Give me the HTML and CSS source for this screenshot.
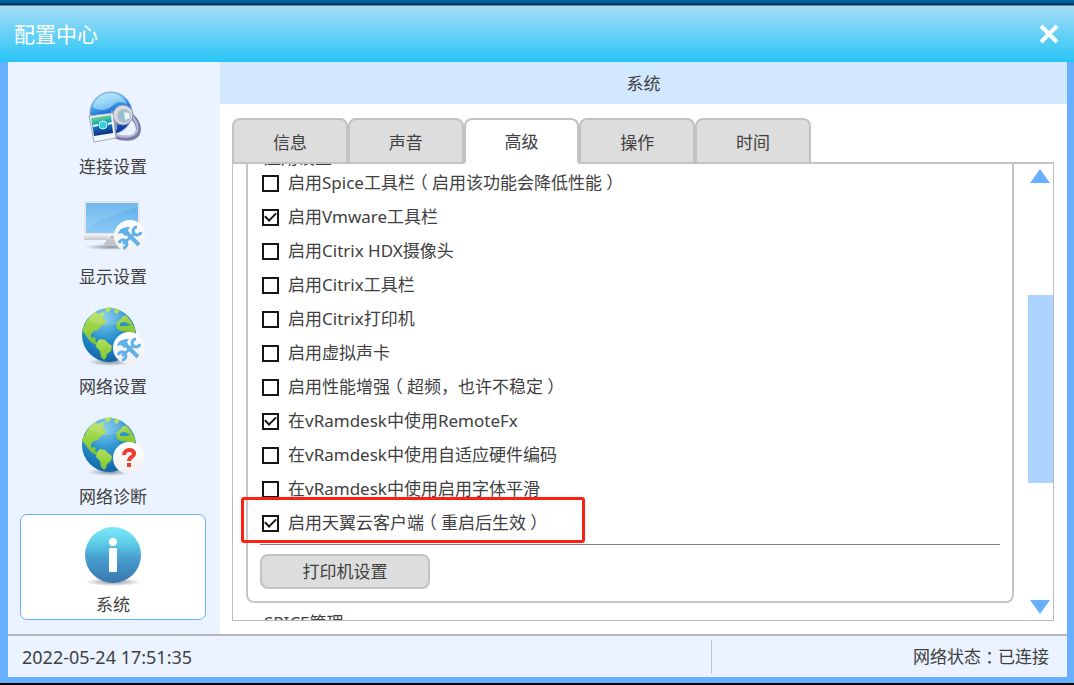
FILE: index.html
```html
<!DOCTYPE html>
<html lang="zh-CN">
<head>
<meta charset="utf-8">
<title>配置中心</title>
<link rel="stylesheet" href="styles.css">
</head>
<body>
<svg class="defs" width="0" height="0" aria-hidden="true">
  <defs>
    <radialGradient id="ocean" cx="0.42" cy="0.2" r="0.85">
      <stop offset="0" stop-color="#7cc8ee"/><stop offset="0.45" stop-color="#2b93cf"/><stop offset="1" stop-color="#0b5e9f"/>
    </radialGradient>
    <linearGradient id="land" x1="0" y1="0" x2="0" y2="1">
      <stop offset="0" stop-color="#b4e05a"/><stop offset="1" stop-color="#7cc42c"/>
    </linearGradient>
    <linearGradient id="disc" x1="0" y1="0" x2="0" y2="1">
      <stop offset="0" stop-color="#ffffff"/><stop offset="1" stop-color="#efefef"/>
    </linearGradient>
    <linearGradient id="screen" x1="0" y1="0" x2="0" y2="1">
      <stop offset="0" stop-color="#5daeea"/><stop offset="1" stop-color="#8ccbf6"/>
    </linearGradient>
    <linearGradient id="chin" x1="0" y1="0" x2="0" y2="1">
      <stop offset="0" stop-color="#f6f6f6"/><stop offset="1" stop-color="#c3c6ca"/>
    </linearGradient>
    <linearGradient id="info" x1="0" y1="0" x2="0" y2="1">
      <stop offset="0" stop-color="#7ce9fa"/><stop offset="0.3" stop-color="#5ccbe6"/><stop offset="0.55" stop-color="#479fcf"/><stop offset="1" stop-color="#3b76ae"/>
    </linearGradient>
    <linearGradient id="dome" x1="0" y1="0" x2="0.3" y2="1">
      <stop offset="0" stop-color="#a9e6fb"/><stop offset="0.3" stop-color="#5fc0f2"/><stop offset="0.55" stop-color="#1c74e0"/><stop offset="1" stop-color="#1140a8"/>
    </linearGradient>
    <linearGradient id="photo" x1="0" y1="0" x2="0.2" y2="1">
      <stop offset="0" stop-color="#a5e070"/><stop offset="0.35" stop-color="#2fb8b0"/><stop offset="0.65" stop-color="#126bb8"/><stop offset="1" stop-color="#0b2f7e"/>
    </linearGradient>
    <radialGradient id="shade">
      <stop offset="0" stop-color="#5c6670" stop-opacity="0.7"/><stop offset="1" stop-color="#5c6670" stop-opacity="0"/>
    </radialGradient>
    <symbol id="globe" viewBox="0 0 64 64">
      <ellipse cx="29" cy="58" rx="22" ry="4" fill="url(#shade)"/>
      <circle cx="28" cy="31" r="27" fill="url(#ocean)"/>
      <path fill="url(#land)" d="M4 21C6 15 10 11 14 8l3 2 5-2 2 2-3 4 4 2 0 4-4 1-4 5-4 1-3 3 0 4 3-1 2 2-1 2 3 3-2 1-5-3-4-5-3-4-2-4z"/>
      <path fill="url(#land)" d="M16 38l3-3 5 1 3 3 4 3-1 5-4 3-1 4-2 2-3-3-1-6-4-4z"/>
      <path fill="url(#land)" d="M24 4l7-1-2 4-4 2zM34 4l5 2-3 4-3-2zM41 13l4-2 5 6 4 8 0 7-4 0-2-4-8-1-4-2-1-6 4-3z"/>
      <path fill="#2d93cd" d="M39 19l5-1 6 3-5 1-6 0z"/>
      <ellipse cx="26" cy="13" rx="18" ry="8" fill="#ffffff" opacity="0.13"/>
    </symbol>
    <symbol id="tools" viewBox="0 0 32 32">
      <circle cx="16" cy="16" r="16" fill="url(#disc)"/>
      <path d="M12 12L25 25" fill="none" stroke="#62b0e8" stroke-width="4"/>
      <path d="M21 13L9 24" fill="none" stroke="#62b0e8" stroke-width="3"/>
      <path d="M4 14C5 9 9 7 16 7L14 10 15 13 11 16 8 13z" fill="#62b0e8"/>
      <path d="M23 7a4 4 0 1 0 4 5" fill="none" stroke="#62b0e8" stroke-width="3"/>
      <path d="M5 23a4 4 0 1 1 4 5" fill="none" stroke="#62b0e8" stroke-width="3"/>
    </symbol>
  </defs>
</svg>

<div class="desktop-edge"></div>
<header class="titlebar">
  <h1 class="title">配置中心</h1>
  <button class="close" type="button" aria-label="关闭">
    <svg width="20" height="20" viewBox="0 0 20 20"><path d="M2 2L18 18M18 2L2 18" fill="none" stroke="#fff" stroke-width="4"/></svg>
  </button>
</header>

<div class="frame">
  <div class="body">
    <nav class="sidebar">
      <button class="nav-item" type="button">
        <svg width="64" height="64" viewBox="0 0 64 64">
          <circle cx="30" cy="29" r="21" fill="url(#dome)" stroke="#8f9fc4" stroke-width="1"/>
          <path d="M12 23C15 12 24 9 31 9c8 1 13 6 15 12-6-5-11-3-15 1s-12 6-19 1z" fill="#e6faff" opacity="0.45"/>
          <path d="M47 30C54 33 59 42 57 48c-2 7-13 8-23 4" fill="none" stroke="#7a7ba6" stroke-width="5"/>
          <path d="M47 30C54 33 58 42 56 47c-2 6-12 7-21 4" fill="none" stroke="#b9bbd6" stroke-width="2"/>
          <path d="M30 26l7 3-1 17-6-2z" fill="#8796bb"/>
          <circle cx="42" cy="31" r="10" fill="#d5dbe4" stroke="#8b94ad" stroke-width="1"/>
          <circle cx="43" cy="32" r="6" fill="#8fc0cb" stroke="#b4bcc9" stroke-width="2"/>
          <path d="M43 28l5 1 1 5-5 2z" fill="#edf2f5"/>
          <path d="M8 32l24-3 3 25-22 4z" fill="#f2f4f7" stroke="#a6adba" stroke-width="1"/>
          <path d="M10 34l20-3 2 18-19 3z" fill="url(#photo)"/>
          <path d="M12 42l5-1m10-1l4-1" stroke="#e6ffff" stroke-width="2"/>
          <circle cx="22" cy="41" r="4" fill="#3ccbd2" stroke="#c7fbf5" stroke-width="1"/>
        </svg>
        <span>连接设置</span>
      </button>
      <button class="nav-item" type="button">
        <svg width="64" height="64" viewBox="0 0 64 64">
          <ellipse cx="31" cy="53" rx="28" ry="3" fill="url(#shade)"/>
          <path d="M26 45h14l2 7H22z" fill="#bfc2c6"/>
          <rect x="3" y="7" width="56" height="33" fill="#e3e7eb"/>
          <rect x="5" y="9" width="52" height="30" fill="url(#screen)"/>
          <path d="M5 9h52v4C38 18 20 25 5 35z" fill="#ffffff" opacity="0.12"/>
          <rect x="3" y="40" width="56" height="6" fill="url(#chin)"/>
          <circle cx="31" cy="43" r="1" fill="#8f959c"/>
          <use href="#tools" x="33" y="26" width="32" height="32"/>
        </svg>
        <span>显示设置</span>
      </button>
      <button class="nav-item" type="button">
        <svg width="64" height="64" viewBox="0 0 64 64">
          <use href="#globe" width="64" height="64"/>
          <use href="#tools" x="32" y="28" width="32" height="32"/>
        </svg>
        <span>网络设置</span>
      </button>
      <button class="nav-item" type="button">
        <svg width="64" height="64" viewBox="0 0 64 64">
          <use href="#globe" width="64" height="64"/>
          <circle cx="48" cy="44" r="16" fill="url(#disc)"/>
          <path d="M43 41c0-7 11-6 10-1 0 3-5 3-5 7" fill="none" stroke="#f03a32" stroke-width="4"/>
          <rect x="46" y="49" width="4" height="4" fill="#f03a32"/>
        </svg>
        <span>网络诊断</span>
      </button>
      <button class="nav-item nav-item-active" type="button" aria-current="page">
        <svg width="64" height="64" viewBox="0 0 64 64">
          <ellipse cx="32" cy="58" rx="28" ry="4" fill="url(#shade)"/>
          <circle cx="32" cy="31" r="28" fill="url(#info)"/>
          <circle cx="32" cy="18" r="4" fill="#fff"/>
          <rect x="28" y="24" width="8" height="24" rx="1" fill="#fff"/>
        </svg>
        <span>系统</span>
      </button>
    </nav>

    <main class="content">
      <h2 class="content-title">系统</h2>
      <div class="content-body">
        <div class="tabs" role="tablist">
          <button class="tab" type="button" role="tab">信息</button>
          <button class="tab" type="button" role="tab">声音</button>
          <button class="tab tab-active" type="button" role="tab" aria-selected="true">高级</button>
          <button class="tab" type="button" role="tab">操作</button>
          <button class="tab" type="button" role="tab">时间</button>
        </div>
        <div class="panel" role="tabpanel">
          <div class="scroll-content">
            <section class="group">
              <h3 class="group-title">应用设置</h3>
              <label class="option"><input class="check" type="checkbox"><span>启用Spice工具栏<span class="mark">（</span>启用该功能会降低性能<span class="mark">）</span></span></label>
              <label class="option"><input class="check" type="checkbox" checked>启用Vmware工具栏</label>
              <label class="option"><input class="check" type="checkbox">启用Citrix HDX摄像头</label>
              <label class="option"><input class="check" type="checkbox">启用Citrix工具栏</label>
              <label class="option"><input class="check" type="checkbox">启用Citrix打印机</label>
              <label class="option"><input class="check" type="checkbox">启用虚拟声卡</label>
              <label class="option"><input class="check" type="checkbox"><span>启用性能增强<span class="mark">（</span>超频，也许不稳定<span class="mark">）</span></span></label>
              <label class="option"><input class="check" type="checkbox" checked>在vRamdesk中使用RemoteFx</label>
              <label class="option"><input class="check" type="checkbox">在vRamdesk中使用自适应硬件编码</label>
              <label class="option"><input class="check" type="checkbox">在vRamdesk中使用启用字体平滑</label>
              <label class="option option-marked"><input class="check" type="checkbox" checked><span>启用天翼云客户端<span class="mark">（</span>重启后生效<span class="mark">）</span></span></label>
              <hr class="rule">
              <button class="push" type="button">打印机设置</button>
            </section>
            <h3 class="next-title">SPICE管理</h3>
          </div>
          <div class="scrollbar">
            <button class="arrow" type="button" aria-label="向上滚动"><svg width="20" height="14" viewBox="0 0 20 14"><path d="M10 0L20 14H0z" fill="#66b0ff"/></svg></button>
            <div class="track"><div class="thumb"></div></div>
            <button class="arrow" type="button" aria-label="向下滚动"><svg width="20" height="14" viewBox="0 0 20 14"><path d="M0 0H20L10 14z" fill="#66b0ff"/></svg></button>
          </div>
        </div>
      </div>
    </main>
  </div>

  <footer class="status">
    <time class="status-time" datetime="2022-05-24T17:51:35">2022-05-24 17:51:35</time>
    <div class="status-net">网络状态<span class="mark">：</span>已连接</div>
  </footer>
</div>
</body>
</html>
```

FILE: styles.css
```css
* {
  box-sizing: border-box;
}

body {
  margin: 0;
  min-height: 100vh;
  display: flex;
  flex-direction: column;
  background: #000;
  color: #404040;
  font: 17px/24px "Noto Sans", "Noto Sans CJK SC", sans-serif;
}

button {
  margin: 0;
  padding: 0;
  border: 0;
  background: none;
  color: inherit;
  font: inherit;
}

h1,
h2,
h3 {
  margin: 0;
  font-weight: 400;
}

.defs {
  position: absolute;
}

/* Full-width punctuation set in the middle of its cell */
.mark {
  display: inline-block;
  width: 1em;
  font-feature-settings: "halt";
  text-align: center;
}

.desktop-edge {
  height: 5px;
  background: linear-gradient(#0065a8, #00518a 60%, #00233d);
}

.titlebar {
  display: flex;
  align-items: center;
  justify-content: space-between;
  height: 57px;
  padding: 0 15px 0 14px;
  border-top: 1px solid #608a9c;
  background: linear-gradient(#a5dcf5, #28c5f6);
}

.title {
  color: #fff;
  font-size: 21px;
  line-height: 28px;
}

.close {
  display: flex;
}

.frame {
  flex: 1;
  display: flex;
  flex-direction: column;
  margin-bottom: 2px;
  border: solid #66b0ff;
  border-width: 0 7px 6px 8px;
}

.body {
  flex: 1;
  display: flex;
  border-bottom: 2px solid #b4b6ba;
}

.sidebar {
  flex: 0 0 212px;
  display: flex;
  flex-direction: column;
  gap: 2px;
  padding: 12px 14px 12px 12px;
  background: #eaf3ff;
}

.nav-item {
  display: flex;
  flex-direction: column;
  align-items: center;
  gap: 7px;
  padding: 9px 0 2px;
  border: 1px solid transparent;
  border-radius: 7px;
}

.nav-item-active {
  gap: 5px;
  border-color: #66b0ff;
  background: #fff;
}

.content {
  flex: 1;
  display: flex;
  flex-direction: column;
  min-width: 0;
  background: #fff;
}

.content-title {
  padding: 10px 0 8px;
  background: #d2e8ff;
  font-size: 17px;
  text-align: center;
}

.content-body {
  flex: 1;
  display: flex;
  flex-direction: column;
  padding: 14px 13px 13px 12px;
}

.tabs {
  position: relative;
  display: flex;
  max-width: 579px;
  margin-bottom: -2px;
}

.tab {
  flex: 1;
  height: 46px;
  padding-top: 3px;
  border: 2px solid #c2c2c2;
  border-radius: 8px 8px 0 0;
  background: #ddd;
}

.tab-active {
  padding-top: 2px;
  border-bottom-color: #fff;
  background: #fff;
}

.panel {
  flex: 1;
  display: flex;
  gap: 14px;
  border: 1px solid #bbb;
  border-top: 2px solid #c6c6c6;
}

.scroll-content {
  flex: 1 1 0;
  height: 456px;
  padding-left: 13px;
  overflow: hidden;
}

.group {
  margin-top: -20px;
  padding: 0 12px 12px;
  border: 2px solid #c6c6c6;
  border-top: 0;
  border-radius: 0 0 8px 8px;
}

.group-title {
  padding: 6px 0 0 4px;
  font-size: 17px;
  line-height: 16px;
}

.option {
  position: relative;
  display: flex;
  align-items: center;
  gap: 9px;
  width: 400px;
  height: 34px;
  padding-left: 2px;
}

.option-marked {
  width: 306px;
}

.option-marked::after {
  content: "";
  position: absolute;
  inset: -9px -19px -3px;
  border: 3px solid #ff1e10;
  border-radius: 3px;
}

.check {
  appearance: none;
  display: grid;
  place-items: center;
  width: 17px;
  height: 17px;
  margin: 0;
  border: 2px solid #161616;
  background: #fff;
}

.check:checked::before {
  content: "";
  width: 9px;
  height: 5px;
  margin-bottom: 3px;
  border: solid #161616;
  border-width: 0 0 2px 2px;
  rotate: -45deg;
}

.rule {
  height: 1px;
  margin: 4px 0 9px;
  border: 0;
  background: #808080;
}

.push {
  display: block;
  width: 170px;
  height: 35px;
  border: 2px solid #c2c2c2;
  border-radius: 8px;
  background: #ddd;
}

.next-title {
  padding: 8px 0 0 18px;
  font-size: 17px;
}

.scrollbar {
  display: flex;
  flex-direction: column;
  gap: 4px;
  width: 25px;
  padding: 5px 0 6px;
}

.arrow {
  display: flex;
  justify-content: center;
  padding-right: 2px;
}

.track {
  flex: 1;
  display: grid;
  grid-template-rows: 108fr 188fr 113fr;
}

.thumb {
  grid-row: 2;
  background: #acd4ff;
}

.status {
  display: flex;
  align-items: center;
  height: 41px;
  background: #eaf3ff;
}

.status-time {
  flex: 1;
  padding-left: 14px;
  font-size: 18px;
}

.status-net {
  width: 356px;
  padding: 5px 18px 5px 0;
  border-left: 1px solid #c0c6ce;
  text-align: right;
}
```
